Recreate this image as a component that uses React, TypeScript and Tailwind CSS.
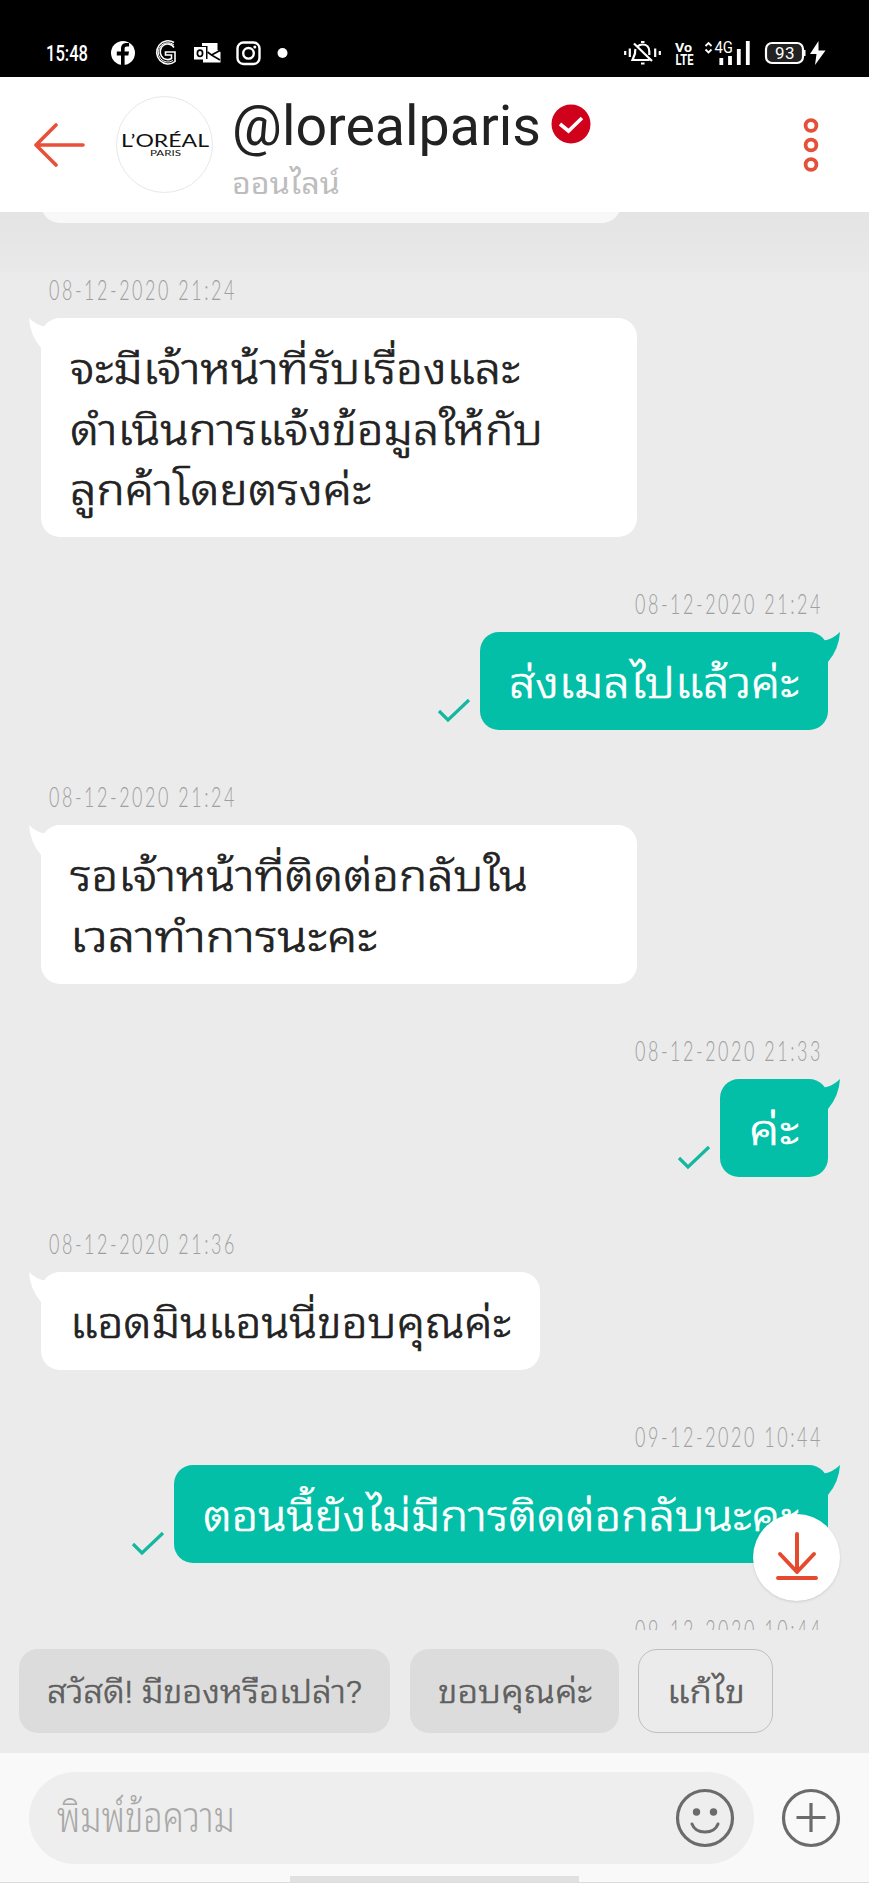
import { useLayoutEffect, useRef, useState } from "react";
import { clsx } from "clsx";

interface Line {
  text: string;
  width: number;
}

interface Message {
  time: string;
  mine?: boolean;
  lines: Line[];
  width: string;
}

const messages: Message[] = [
  {
    time: "08-12-2020 21:24",
    lines: [
      { text: "จะมีเจ้าหน้าที่รับเรื่องและ", width: 450 },
      { text: "ดำเนินการแจ้งข้อมูลให้กับ", width: 473 },
      { text: "ลูกค้าโดยตรงค่ะ", width: 301 },
    ],
    width: "w-[596px]",
  },
  { time: "08-12-2020 21:24", mine: true, lines: [{ text: "ส่งเมลไปแล้วค่ะ", width: 290 }], width: "w-[348px]" },
  {
    time: "08-12-2020 21:24",
    lines: [
      { text: "รอเจ้าหน้าที่ติดต่อกลับใน", width: 458 },
      { text: "เวลาทำการนะคะ", width: 307 },
    ],
    width: "w-[596px]",
  },
  { time: "08-12-2020 21:33", mine: true, lines: [{ text: "ค่ะ", width: 50 }], width: "w-[108px]" },
  { time: "08-12-2020 21:36", lines: [{ text: "แอดมินแอนนี่ขอบคุณค่ะ", width: 441 }], width: "w-[499px]" },
  {
    time: "09-12-2020 10:44",
    mine: true,
    lines: [{ text: "ตอนนี้ยังไม่มีการติดต่อกลับนะคะ", width: 596 }],
    width: "w-[654px]",
  },
];

// Stretches a single line of text to an exact width
function FitText({ text, width, className }: { text: string; width: number; className?: string }) {
  const ref = useRef<HTMLSpanElement>(null);
  const [scale, setScale] = useState(1);

  useLayoutEffect(() => {
    if (ref.current) setScale(width / ref.current.getBoundingClientRect().width);
  }, [text, width]);

  return (
    <span className="block text-left whitespace-nowrap" style={{ width }}>
      <span ref={ref} className={clsx("inline-block origin-left", className)} style={{ transform: `scaleX(${scale})` }}>
        {text}
      </span>
    </span>
  );
}

function StatusBar() {
  return (
    <div className="h-[77px] shrink-0 bg-black">
      <svg width="869" height="77" viewBox="0 0 869 77" fill="none" stroke="#fff" className="block">
        <text x="46" y="61" fontSize="22" fontWeight="500" fill="#fff" stroke="none" textLength="42" lengthAdjust="spacingAndGlyphs" fontFamily="Roboto, sans-serif">15:48</text>

        {/* facebook */}
        <circle cx="123" cy="53" r="12" fill="#fff" stroke="none" />
        <path d="M121 65V55.500h-4.200v-4H121v-2.600c0-4 2-6 5.500-6h2.600v3.700h-2.200c-1.700 0-2.300.8-2.300 2.400v2.500h4.400l-.7 4h-3.700V65z" fill="#000" stroke="none" />

        {/* double-stroke G */}
        <path d="M174 42.500A11.300 11.600 0 1 0 175 61.500V52H165.500V55H171.500V58.500A7.500 7.800 0 1 1 174 47.500" strokeWidth="1.600" />
        <path d="M174 45A9.500 9.700 0 1 0 173 60.500" strokeWidth="1" />

        {/* outlook */}
        <path d="M202 43h15.500v7l3 2v10.500h-17.500v-3.500h4.500v-13h-5.500z" fill="#fff" stroke="none" />
        <path d="M220 50.500l-8.500 4.500-4-3M211.500 55l8.500 5" stroke="#000" strokeWidth="1.600" />
        <rect x="194" y="47" width="12" height="12.500" fill="#fff" stroke="none" />
        <ellipse cx="200" cy="53.300" rx="2.600" ry="3.200" stroke="#000" strokeWidth="1.700" />

        {/* instagram */}
        <rect x="237.500" y="42.500" width="22" height="21.500" rx="6" strokeWidth="2.400" />
        <circle cx="248.500" cy="53.300" r="5.300" strokeWidth="2.400" />
        <circle cx="254.800" cy="47" r="1.500" fill="#fff" stroke="none" />
        <circle cx="282.500" cy="53" r="5" fill="#fff" stroke="none" />

        {/* muted bell with vibration ticks */}
        <path d="M625.200 51v4M629.800 48.500v8.500M655.200 48.500v8.500M659.800 51v4" strokeWidth="2.200" />
        <path d="M637.500 46.500c1.500-1.500 3-2 5-2 4.500 0 6.800 3 6.800 7v3.500M635.500 49c-.5 1.500-.5 3-.5 4.500l-2.500 6.500h17M634 43.500l18 17.500M641 42h3.500M641 63.500h3.500" strokeWidth="2.200" />

        <text x="675" y="51.500" fontSize="13.500" fontWeight="700" fill="#fff" stroke="none" textLength="17" lengthAdjust="spacingAndGlyphs" fontFamily="Roboto, sans-serif">Vo</text>
        <text x="675.500" y="65" fontSize="14.500" fontWeight="700" fill="#fff" stroke="none" textLength="18" lengthAdjust="spacingAndGlyphs" fontFamily="Roboto, sans-serif">LTE</text>

        {/* signal */}
        <path d="M705.500 46l3-3 3 3M705.500 49.500l3 3 3-3" strokeWidth="1.800" />
        <text x="714.500" y="53" fontSize="16.500" fill="#fff" stroke="none" textLength="18.500" lengthAdjust="spacingAndGlyphs" fontFamily="Roboto, sans-serif">4G</text>
        <path d="M721.300 58v7M730 56v9M738.800 49v16M747.800 41v24" strokeWidth="3.800" />

        {/* battery */}
        <rect x="766" y="43" width="37" height="20" rx="6" fill="#222" strokeWidth="2.200" />
        <path d="M804.500 50v6" strokeWidth="2" />
        <text x="775" y="58.500" fontSize="17" fill="#fff" stroke="none" textLength="19.500" fontFamily="Roboto, sans-serif">93</text>
        <path d="M818.500 41l-8.500 13h6.500l-1.500 11 10.500-14.500h-7z" fill="#fff" stroke="none" />
      </svg>
    </div>
  );
}

function Header() {
  return (
    <header className="flex h-[135px] shrink-0 items-start bg-white">
      <svg width="52" height="48" viewBox="0 0 52 48" fill="none" stroke="#e8503a" strokeWidth="3.600" strokeLinecap="round" strokeLinejoin="round" className="mt-[44px] ml-[34px]">
        <path d="M49 24H2M22 4L2 24l20 20" />
      </svg>

      <div className="mt-[19px] ml-[30px] flex size-[97px] flex-col items-center rounded-full border border-[#e8e8e8]">
        <svg width="95" height="95" viewBox="0 0 95 95" fill="#111" fontFamily="Lato, sans-serif">
          <text x="4" y="49.500" fontSize="18" textLength="88" lengthAdjust="spacingAndGlyphs">L’ORÉAL</text>
          <text x="33" y="58.500" fontSize="7.800" textLength="31" lengthAdjust="spacingAndGlyphs">PARIS</text>
        </svg>
      </div>

      <div className="ml-[19px] flex flex-col">
        <div className="flex h-[80px] items-start">
          <h1 className="mt-[17px] text-[55px] leading-[64px] text-[#222]">
            <FitText text="@lorealparis" width={309} />
          </h1>
          <svg width="40" height="40" viewBox="0 0 40 40" fill="none" className="mt-[27px] ml-[10px]">
            <circle cx="20" cy="20" r="19.500" fill="#d0011b" />
            <path d="M9 20l8.500 7L31 14" stroke="#fff" strokeWidth="3.600" />
          </svg>
        </div>
        <div className="mt-[7px] text-[30px] leading-[40px] text-[#bdbdbd]">
          <FitText text="ออนไลน์" width={108} />
        </div>
      </div>

      <svg width="16" height="56" viewBox="0 0 16 56" fill="none" stroke="#e3513b" strokeWidth="3.800" className="mt-[40px] mr-[50px] ml-auto">
        <circle cx="8" cy="8.500" r="5.400" />
        <circle cx="8" cy="28" r="5.400" />
        <circle cx="8" cy="47.500" r="5.400" />
      </svg>
    </header>
  );
}

function Timestamp({ time, mine }: { time: string; mine?: boolean }) {
  return (
    <div className={clsx("flex h-[95px] items-end pr-[46px] pl-[49px] pb-[11px]", mine && "justify-end")}>
      <FitText
        text={time}
        width={188}
        className="font-[Lato] text-[28px] leading-[34px] font-light tracking-[4px] text-[#9f9f9f]"
      />
    </div>
  );
}

function Bubble({ mine, lines, width }: Message) {
  return (
    <div className={clsx("flex items-end px-[41px]", mine && "justify-end")}>
      {mine && (
        <svg width="34" height="26" viewBox="0 0 34 26" fill="none" stroke="#14b8a0" strokeWidth="3.200" className="mr-[9px] mb-[6px]">
          <path d="M2 13l9 9L32 2" />
        </svg>
      )}
      <div
        className={clsx(
          "relative rounded-[19px] pt-[22px] pb-[15.5px] pl-[29px] text-[42px] leading-[60.5px] font-light [-webkit-text-stroke:0.7px_currentColor]",
          width,
          mine ? "bg-[#03bfa7] text-white" : "bg-white text-[#222]",
        )}
      >
        {lines.map((line) => (
          <div key={line.text} className="h-[60.5px]">
            <FitText text={line.text} width={line.width} />
          </div>
        ))}
        <svg
          width="20"
          height="32"
          viewBox="0 0 20 32"
          className={clsx("absolute top-0", mine ? "-right-[12px]" : "-left-[12px] -scale-x-100")}
          fill={mine ? "#03bfa7" : "#fff"}
        >
          <path d="M0 12L4 8.500Q13 7 20 0Q19 17 8 30L0 30z" />
        </svg>
      </div>
    </div>
  );
}

function QuickReplies() {
  return (
    <div className="flex h-[123px] shrink-0 items-start gap-[20px] pt-[19px] pl-[19px] text-[32px] leading-[87px] font-light text-[#5f5f5f] [-webkit-text-stroke:0.6px_currentColor]">
      <button className="flex h-[84px] w-[371px] justify-center rounded-[19px] bg-[#dcdcdc]">
        <FitText text="สวัสดี! มีของหรือเปล่า?" width={315} />
      </button>
      <button className="flex h-[84px] w-[209px] justify-center rounded-[19px] bg-[#dcdcdc]">
        <FitText text="ขอบคุณค่ะ" width={154} />
      </button>
      <button className="-ml-px flex h-[84px] w-[135px] justify-center rounded-[19px] border border-[#bfbfbf] leading-[85px]">
        <FitText text="แก้ไข" width={78} />
      </button>
    </div>
  );
}

function Composer() {
  return (
    <div className="relative flex h-[130px] shrink-0 items-start border-b border-[#dcdcdc] bg-[#f9f9f9] pt-[19px] pl-[29px]">
      <div className="flex h-[92px] w-[725px] items-center justify-between rounded-full bg-[#eee] pr-[19px] pl-[28px]">
        <div className="text-[42px] leading-[60px] font-light text-[#a8a8a8]">
          <FitText text="พิมพ์ข้อความ" width={178} />
        </div>
        <svg width="60" height="60" viewBox="0 0 60 60" fill="none" stroke="#6b6b6b">
          <circle cx="30" cy="30" r="27.500" strokeWidth="3.200" />
          <circle cx="21.500" cy="24" r="3.700" fill="#6b6b6b" stroke="none" />
          <circle cx="38.500" cy="24" r="3.700" fill="#6b6b6b" stroke="none" />
          <path d="M17 36Q20 44 30 44T43 36" strokeWidth="3" strokeLinecap="round" />
        </svg>
      </div>
      <svg width="60" height="60" viewBox="0 0 60 60" fill="none" stroke="#6b6b6b" strokeWidth="3.200" className="mt-[16px] ml-[27px]">
        <circle cx="30" cy="30" r="27.500" />
        <path d="M30 15v29M15.500 29.500h29" />
      </svg>
      <div className="absolute bottom-0 left-[290px] h-[6px] w-[289px] bg-[#e1e1e1]" />
    </div>
  );
}

export default function App() {
  return (
    <div className="flex h-[1883px] w-[869px] flex-col overflow-hidden bg-[#ebebeb] font-[Roboto,'Noto_Sans_Thai_Looped','Noto_Looped_Thai','Noto_Sans_Thai','Noto_Sans',sans-serif]">
      <StatusBar />
      <Header />
      <main className="relative h-[1418px] shrink-0 overflow-hidden">
        <div className="-mt-[29px] ml-[41px] h-[40px] w-[580px] rounded-b-[19px] bg-white" />
        {messages.map((m, i) => (
          <div key={i}>
            <Timestamp time={m.time} mine={m.mine} />
            <Bubble {...m} />
          </div>
        ))}
        <Timestamp time="09-12-2020 10:44" mine />
        <div className="absolute inset-x-0 top-0 h-[60px] bg-linear-to-b from-black/3 to-black/1" />
        <button className="absolute top-[1302px] left-[753px] flex size-[87px] items-center justify-center rounded-full bg-white shadow-sm">
          <svg width="44" height="52" viewBox="0 0 44 52" fill="none" stroke="#e64a2e" strokeWidth="4" strokeLinecap="round" strokeLinejoin="round">
            <path d="M22 2v38M5 22l17 18 17-18M3 46h38" />
          </svg>
        </button>
      </main>
      <QuickReplies />
      <Composer />
    </div>
  );
}
